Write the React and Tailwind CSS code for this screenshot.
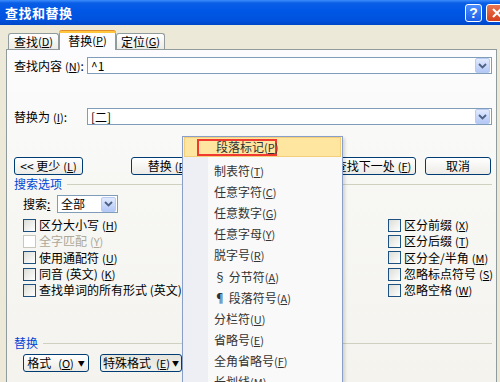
import React from 'react';

const Chevron = () => (
  <svg width="9" height="6" viewBox="0 0 9 6">
    <path d="M1 1 L4.5 4.5 L8 1" fill="none" stroke="#4D6185" strokeWidth="1.8" />
  </svg>
);

const ArrowBtn = () => (
  <div className="w-[15px] h-[15px] mr-px rounded-[2px] border border-[#B9CBF3] bg-[linear-gradient(180deg,#E1EAFE,#B4C8F6)] flex items-center justify-center">
    <Chevron />
  </div>
);

const Combo = ({ value, className }) => (
  <div className={`h-[17px] bg-white border border-[#7F9DB9] flex items-center ${className}`}>
    <span className="flex-1 pl-[3px] leading-none">{value}</span>
    <ArrowBtn />
  </div>
);

const Btn = ({ children, className = '', pressed }) => (
  <div
    className={`h-[18px] rounded-[3px] border border-[#003C74] flex items-center justify-center leading-none whitespace-nowrap ${
      pressed ? 'bg-[linear-gradient(180deg,#E5E4DD,#F1F0EB)]' : 'bg-[linear-gradient(180deg,#FFFFFF,#ECEBE6)]'
    } ${className}`}
  >
    {children}
  </div>
);

const Check = ({ label, disabled }) => (
  <div className="h-[16.3px] flex items-center gap-[3px] whitespace-nowrap">
    <div
      className={`w-[13px] h-[13px] shrink-0 border ${
        disabled ? 'border-[#CAC8BB] bg-white' : 'border-[#1C5180] bg-[linear-gradient(135deg,#DCDCD7,#FFFFFF)]'
      }`}
    />
    <span className={disabled ? 'text-[#ACA899]' : 'text-black'}>{label}</span>
  </div>
);

// accelerator key, e.g. (N)
const Acc = ({ k, sp }) => (
  <span className={`text-[11px] ${sp ? 'ml-[3px]' : ''}`}>
    (<u>{k}</u>)
  </span>
);

const Group = ({ title, className = '' }) => (
  <div className={`flex items-center gap-[5px] ${className}`}>
    <span className="text-[#0046D5] leading-none">{title}</span>
    <div className="flex-1 h-0 border-t border-[#D0D0BF]" />
  </div>
);

const menu = [
  ['段落标记', 'P'],
  ['制表符', 'T'],
  ['任意字符', 'C'],
  ['任意数字', 'G'],
  ['任意字母', 'Y'],
  ['脱字号', 'R'],
  ['§ 分节符', 'A'],
  ['¶ 段落符号', 'A'],
  ['分栏符', 'U'],
  ['省略号', 'E'],
  ['全角省略号', 'F'],
  ['长划线', 'M'],
];

export default function App() {
  return (
    <div className="relative w-[500px] h-[382px] overflow-hidden bg-[#ECE9D8] text-[12px] text-black font-['Noto_Sans_CJK_SC',sans-serif]">
      {/* title bar */}
      <div className="h-[25px] bg-[linear-gradient(180deg,#3D8DFB_0%,#0A5EE6_12%,#0058E6_40%,#0052DD_80%,#0047C8_100%)] flex items-center pl-[5px]">
        <span className="flex-1 text-white font-bold text-[13px] leading-none tracking-[0.5px]">查找和替换</span>
        <div className="w-[17px] h-[18px] rounded-[3px] border border-white bg-[linear-gradient(180deg,#4C8EFD,#1B5FE8)] flex items-center justify-center text-white font-bold text-[14px] leading-none font-['Liberation_Sans',sans-serif]">
          ?
        </div>
        <div className="ml-[4px] mr-[-8px] w-[22px] h-[18px] rounded-[3px] border border-white bg-[linear-gradient(180deg,#E97551,#D4411E)] flex items-center justify-center">
          <svg width="10" height="10" viewBox="0 0 10 10">
            <path d="M1 1 L9 9 M9 1 L1 9" stroke="white" strokeWidth="2" />
          </svg>
        </div>
      </div>

      <div className="px-[6px] pr-[3px]">
        {/* tabs */}
        <div className="flex items-end h-[24px] pl-[2px]">
          <div className="w-[51px] h-[16px] border border-b-0 border-[#919B9C] rounded-t-[3px] bg-[linear-gradient(180deg,#FFFFFF,#ECEBE5)] flex items-center justify-center leading-none">
            查找<Acc k="D" />
          </div>
          <div className="relative w-[57px] h-[19px] -mb-px border-x border-[#919B9C] rounded-t-[3px] bg-[#FCFCFE] flex items-center justify-center leading-none z-10">
            <div className="absolute -top-px -left-px -right-px h-[3px] rounded-t-[3px] bg-[#FFC83C] border-t border-[#E68B2C]" />
            替换<Acc k="P" />
          </div>
          <div className="w-[49px] h-[16px] border border-b-0 border-[#919B9C] rounded-t-[3px] bg-[linear-gradient(180deg,#FFFFFF,#ECEBE5)] flex items-center justify-center leading-none">
            定位<Acc k="G" />
          </div>
        </div>

        {/* panel */}
        <div className="h-[340px] border border-[#919B9C] bg-[linear-gradient(180deg,#FCFCFE_0%,#F7F7F4_40%,#F4F3EE_100%)] pl-[7px] pr-[4px]">
          <div className="mt-[7px] flex items-center">
            <span className="w-[73px] leading-none">
              查找内容<Acc k="N" sp />:
            </span>
            <Combo value="^1" className="flex-1" />
          </div>
          <div className="mt-[34px] flex items-center">
            <span className="w-[73px] leading-none">
              替换为<Acc k="I" sp />:
            </span>
            <Combo value="[二]" className="flex-1" />
          </div>

          <div className="mt-[32px] flex items-center pr-px">
            <Btn className="w-[69px]">
              &lt;&lt; 更少<Acc k="L" sp />
            </Btn>
            <Btn className="ml-[48px] w-[75px]">
              替换<Acc k="R" sp />
            </Btn>
            <div className="flex-1" />
            <Btn className="w-[86px]">
              查找下一处<Acc k="F" sp />
            </Btn>
            <Btn className="ml-[9px] w-[66px]">取消</Btn>
          </div>

          <Group title="搜索选项" className="mt-[3px]" />

          <div className="mt-[5px] pl-[9px] flex items-center">
            <span className="w-[34px] leading-none">
              搜索<u>:</u>
            </span>
            <Combo value="全部" className="w-[61px] h-[18px]" />
          </div>

          <div className="mt-[4px] pl-[9px] flex">
            <div className="w-[365px] shrink-0">
              <Check label={<>区分大小写<Acc k="H" sp /></>} />
              <Check label={<>全字匹配<Acc k="Y" sp /></>} disabled />
              <Check label={<>使用通配符<Acc k="U" sp /></>} />
              <Check label={<>同音 (英文)<Acc k="K" sp /></>} />
              <Check label={<>查找单词的所有形式 (英文)<Acc k="W" sp /></>} />
            </div>
            <div className="shrink-0">
              <Check label={<>区分前缀<Acc k="X" sp /></>} />
              <Check label={<>区分后缀<Acc k="T" sp /></>} />
              <Check label={<>区分全/半角<Acc k="M" sp /></>} />
              <Check label={<>忽略标点符号<Acc k="S" sp /></>} />
              <Check label={<>忽略空格<Acc k="W" sp /></>} />
            </div>
          </div>

          <Group title="替换" className="mt-[39px]" />

          <div className="mt-[5px] pl-[9px] flex gap-[11px]">
            <Btn className="w-[66px] gap-[4px]">
              格式<Acc k="O" sp /> <span className="text-[7px]">▼</span>
            </Btn>
            <Btn className="w-[82px] gap-[2px]" pressed>
              特殊格式<Acc k="E" sp /><span className="text-[7px]">▼</span>
            </Btn>
          </div>
        </div>
      </div>

      {/* popup menu */}
      <div className="absolute left-[182px] top-[136px] w-[161px] h-[260px] border border-[#8A9FC8] bg-[#F9F9F9] shadow-[2px_2px_3px_rgba(0,0,0,0.15)] flex">
        <div className="absolute left-0 top-0 bottom-0 w-[25px] bg-[#EDEFF4]" />
        <div className="relative flex-1 flex flex-col">
          {menu.map(([t, k], i) => (
            <div
              key={i}
              className={`relative flex items-center pl-[31px] text-[#333] leading-none whitespace-nowrap ${
                i === 0 ? 'h-[20px] mx-px bg-[#FFE6A0] border border-[#F5CE7A] mb-[3px] pl-[30px]' : 'h-[21.2px]'
              }`}
            >
              {i === 0 && (
                <div className="absolute left-[12px] top-px w-[80px] h-[17px] border-2 border-[#F03A30]" />
              )}
              <span className="relative">
                {t}
                <span className="text-[11px]">
                  (<u>{k}</u>)
                </span>
              </span>
            </div>
          ))}
        </div>
      </div>
    </div>
  );
}
